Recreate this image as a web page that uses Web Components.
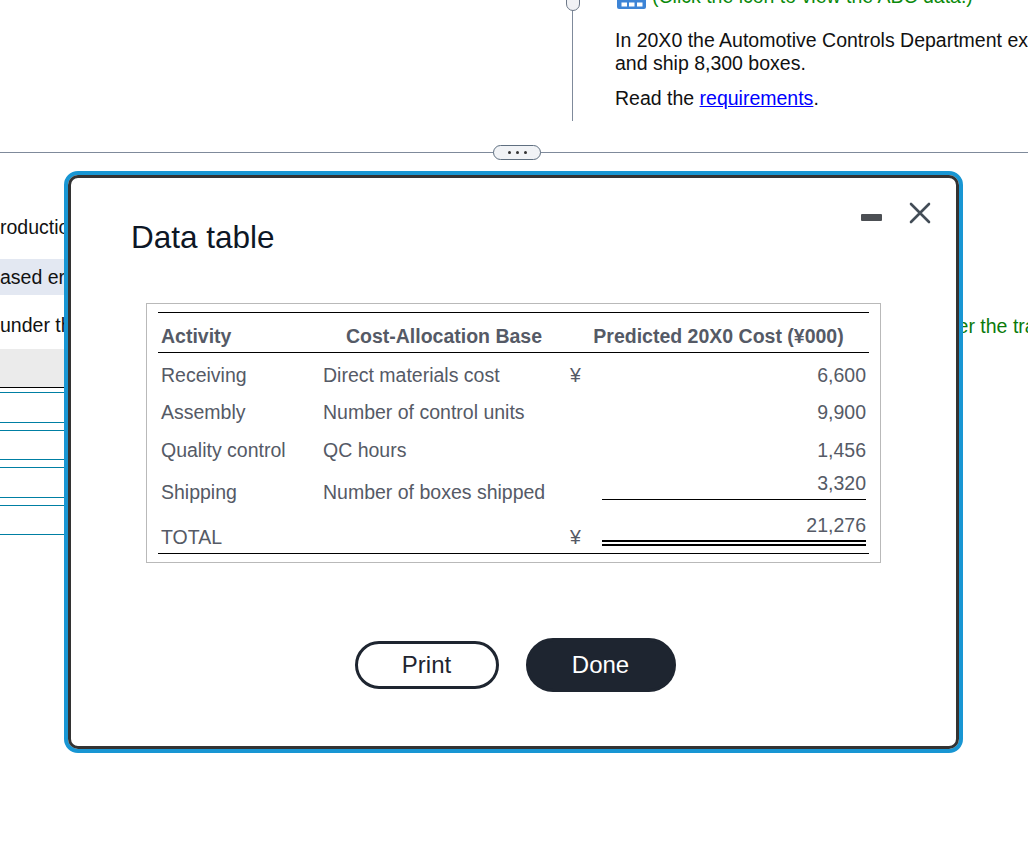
<!DOCTYPE html>
<html>
<head>
<meta charset="utf-8">
<title>Data table</title>
<style>
html, body { margin: 0; height: 100%; background: #fff; overflow: hidden; }
body { font-family: "Liberation Sans", Arial, sans-serif; }
</style>
</head>
<body>
<page-view>
  <top-pane>
    <span slot="hint">(Click the icon to view the ABC data.)</span>
    <p>In 20X0 the Automotive Controls Department expects to make 4,000 control units<br>and ship 8,300 boxes.</p>
    <p>Read the <a href="#" style="color:#00f">requirements</a>.</p>
  </top-pane>
  <pane-divider></pane-divider>
  <lower-pane></lower-pane>
  <data-modal>
    <span slot="title">Data table</span>
    <cost-table></cost-table>
    <pill-button slot="actions">Print</pill-button>
    <pill-button slot="actions" primary>Done</pill-button>
  </data-modal>
</page-view>

<script>
class PageView extends HTMLElement {
  constructor() {
    super()
    this.attachShadow({ mode: 'open' })
    this.shadowRoot.innerHTML = `
      <style>
        :host { display: block; position: relative; width: 1028px; height: 853px; overflow: hidden; }
      </style>
      <slot></slot>
    `
  }
}

class TopPane extends HTMLElement {
  constructor() {
    super()
    this.attachShadow({ mode: 'open' })
    this.shadowRoot.innerHTML = `
      <style>
        :host { display: flex; height: 152px; font-size: 19.5px; color: #111; overflow: hidden; }
        .rail { position: relative; flex: none; width: 572px; height: 121px; border-right: 1px solid #7f8a9b; }
        .knob {
          position: absolute; left: 566px; top: -14px; width: 14px; height: 25px;
          box-sizing: border-box; background: #f1f2f5; border: 1px solid #6d7888; border-radius: 0 0 7px 7px;
        }
        .body { flex: none; width: 500px; margin-left: 42px; white-space: nowrap; }
        .hint { display: flex; align-items: flex-start; gap: 6px; height: 21px; margin-top: -12px; color: #0b8a0b; line-height: 16px; }
        .hint svg { flex: none; margin-left: 2px; }
        ::slotted(p) { margin: 0 0 12px; line-height: 23px; }
        .copy { margin-top: 20px; }
      </style>
      <div class="rail"><div class="knob"></div></div>
      <div class="body">
        <div class="hint">
          <svg width="29" height="21" viewBox="0 -12 29 21">
            <rect x="0" y="-12" width="29" height="21" rx="2" fill="#3d84d6"/>
            <rect x="4.5" y="2.5" width="5.5" height="4" fill="#fff"/>
            <rect x="12" y="2.5" width="5.5" height="4" fill="#fff"/>
            <rect x="20" y="2.5" width="5.5" height="4" fill="#fff"/>
          </svg>
          <slot name="hint"></slot>
        </div>
        <div class="copy"><slot></slot></div>
      </div>
    `
  }
}

class PaneDivider extends HTMLElement {
  constructor() {
    super()
    this.attachShadow({ mode: 'open' })
    this.shadowRoot.innerHTML = `
      <style>
        :host { display: block; position: relative; height: 1px; background: #7f8a9b; }
        .grip {
          position: absolute; left: 493px; top: -7px; width: 48px; height: 15px; box-sizing: border-box;
          display: flex; align-items: center; justify-content: center; gap: 5px;
          background: #f1f3f6; border: 1px solid #5f6f80; border-radius: 8px;
        }
        i { width: 3px; height: 3px; border-radius: 50%; background: #333; }
      </style>
      <div class="grip"><i></i><i></i><i></i></div>
    `
  }
}

class LowerPane extends HTMLElement {
  constructor() {
    super()
    this.attachShadow({ mode: 'open' })
    this.shadowRoot.innerHTML = `
      <style>
        :host { display: flex; justify-content: space-between; font-size: 19.5px; color: #111; }
        .left { flex: none; width: 70px; overflow: hidden; white-space: nowrap; padding-top: 56px; }
        .line { height: 36px; line-height: 36px; }
        .line.shade { background: #e3e8f2; margin-top: 14px; }
        .line.gap { margin-top: 12px; }
        .head { height: 38px; margin-top: 6px; background: #ebebeb; border-bottom: 1px solid #000; }
        .rule { border-bottom: 1px solid #007fa3; }
        .right { flex: none; width: 70px; overflow: hidden; white-space: nowrap; padding-top: 161px; color: #0b7a0b; line-height: 24px; }
        .right span { margin-left: -21px; }
      </style>
      <div class="left">
        <div class="line" style="margin-left:-13px">Production</div>
        <div class="line shade">ased er</div>
        <div class="line gap">under the</div>
        <div class="head"></div>
        <div class="rule" style="height:4px"></div>
        <div class="rule" style="height:29px"></div>
        <div class="rule" style="height:7px"></div>
        <div class="rule" style="height:28px"></div>
        <div class="rule" style="height:7px"></div>
        <div class="rule" style="height:29px"></div>
        <div class="rule" style="height:7px"></div>
        <div class="rule" style="height:28px"></div>
      </div>
      <div class="right"><span>over the transactions</span></div>
    `
  }
}

class DataModal extends HTMLElement {
  constructor() {
    super()
    this.attachShadow({ mode: 'open' })
    this.shadowRoot.innerHTML = `
      <style>
        :host {
          display: block; position: absolute; left: 64px; top: 171px; width: 899px; height: 582px;
          box-sizing: border-box; background: #fff; border: 4px solid #1896d3; border-radius: 14px;
          font-size: 20px;
        }
        .frame {
          box-sizing: border-box; height: 100%; border: 3px solid #333; border-radius: 10px;
          display: flex; flex-direction: column; padding: 0 75px;
        }
        .title { margin-top: 40px; margin-left: -15px; font-size: 31.5px; line-height: 38px; color: #0d1726; }
        .tools { position: absolute; right: 28px; top: 27px; display: flex; align-items: center; gap: 27px; }
        .min { width: 21px; height: 7px; background: #4c4f54; border-radius: 1px; margin-top: 9px; }
        .content { margin-top: 47px; }
        .actions { display: flex; justify-content: center; align-items: center; gap: 27px; margin-top: 75px; margin-left: 3px; }
      </style>
      <div class="frame">
        <div class="title"><slot name="title"></slot></div>
        <div class="tools">
          <div class="min"></div>
          <svg width="22" height="22" viewBox="0 0 22 22">
            <path d="M2 2 L20 20 M20 2 L2 20" stroke="#434d57" stroke-width="2.6" stroke-linecap="round" fill="none"/>
          </svg>
        </div>
        <div class="content"><slot></slot></div>
        <div class="actions"><slot name="actions"></slot></div>
      </div>
    `
  }
}

class CostTable extends HTMLElement {
  constructor() {
    super()
    this.attachShadow({ mode: 'open' })
    this.shadowRoot.innerHTML = `
      <style>
        :host {
          display: block; box-sizing: border-box; width: 735px; height: 260px;
          border: 1px solid #b9b9b9; padding: 8px 11px 0; font-size: 19.5px; color: #555a66;
        }
        .grid {
          display: grid; grid-template-columns: 162px 248px 34px 1fr;
          grid-template-rows: 40px 38px 38px 38px 45px 41px;
          border-top: 1px solid #000; border-bottom: 1px solid #000;
        }
        .grid > div { padding-left: 3px; white-space: nowrap; line-height: 23px; align-self: start; }
        .grid > .h { font-weight: bold; border-bottom: 1px solid #000; align-self: stretch; line-height: 46px; }
        .grid > .c { text-align: center; padding-left: 0; }
        .grid > .wide { grid-column: 3 / 5; }
        .grid > .y { padding-left: 2px; }
        .r1 { padding-top: 11px; }
        .r2, .r3 { padding-top: 10px; }
        .r4, .r5 { padding-top: 14px; }
        .grid > .n { text-align: right; padding-left: 0; padding-right: 3px; }
        .grid > .sub {
          box-sizing: border-box; height: 33px; padding: 5px 0 0; margin-right: 3px; border-bottom: 1px solid #000;
        }
        .grid > .tot {
          box-sizing: border-box; height: 34px; padding: 2px 0 0; margin-right: 3px; border-bottom: 6px double #000;
        }
      </style>
      <div class="grid">
        <div class="h">Activity</div>
        <div class="h c">Cost-Allocation Base</div>
        <div class="h c wide">Predicted 20X0 Cost (¥000)</div>

        <div class="r1">Receiving</div><div class="r1">Direct materials cost</div><div class="r1 y">¥</div><div class="r1 n">6,600</div>
        <div class="r2">Assembly</div><div class="r2">Number of control units</div><div></div><div class="r2 n">9,900</div>
        <div class="r3">Quality control</div><div class="r3">QC hours</div><div></div><div class="r3 n">1,456</div>
        <div class="r4">Shipping</div><div class="r4">Number of boxes shipped</div><div></div><div class="n sub">3,320</div>
        <div class="r5">TOTAL</div><div></div><div class="r5 y">¥</div><div class="n tot">21,276</div>
      </div>
    `
  }
}

class PillButton extends HTMLElement {
  constructor() {
    super()
    this.attachShadow({ mode: 'open' })
    this.shadowRoot.innerHTML = `
      <style>
        :host {
          display: flex; align-items: center; justify-content: center; box-sizing: border-box;
          width: 144px; height: 48px; border: 3px solid #1e2530; border-radius: 24px;
          background: #fff; color: #1e2530; font-size: 24px;
        }
        :host([primary]) { width: 150px; height: 54px; border-radius: 27px; background: #1e2530; color: #fff; }
      </style>
      <slot></slot>
    `
  }
}

customElements.define('page-view', PageView)
customElements.define('top-pane', TopPane)
customElements.define('pane-divider', PaneDivider)
customElements.define('lower-pane', LowerPane)
customElements.define('data-modal', DataModal)
customElements.define('cost-table', CostTable)
customElements.define('pill-button', PillButton)
</script>
</body>
</html>
